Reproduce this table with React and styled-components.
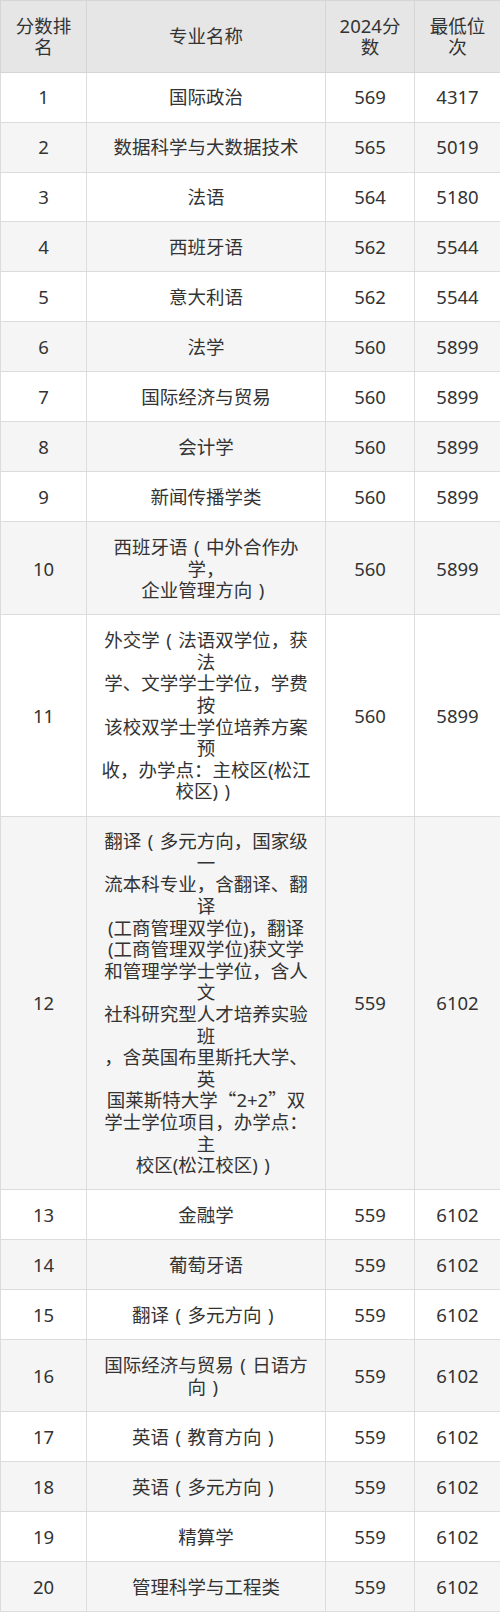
import React from 'react';
import styled, { createGlobalStyle } from 'styled-components';

const rows = [
    ['1', ['国际政治'], '569', '4317'],
    ['2', ['数据科学与大数据技术'], '565', '5019'],
    ['3', ['法语'], '564', '5180'],
    ['4', ['西班牙语'], '562', '5544'],
    ['5', ['意大利语'], '562', '5544'],
    ['6', ['法学'], '560', '5899'],
    ['7', ['国际经济与贸易'], '560', '5899'],
    ['8', ['会计学'], '560', '5899'],
    ['9', ['新闻传播学类'], '560', '5899'],
    ['10', ['西班牙语（中外合作办', '学，', '企业管理方向）'], '560', '5899'],
    ['11', [
        '外交学（法语双学位，获', '法',
        '学、文学学士学位，学费', '按',
        '该校双学士学位培养方案', '预',
        '收，办学点：主校区(松江', '校区)）',
    ], '560', '5899'],
    ['12', [
        '翻译（多元方向，国家级', '一',
        '流本科专业，含翻译、翻', '译',
        '(工商管理双学位)，翻译',
        '(工商管理双学位)获文学',
        '和管理学学士学位，含人', '文',
        '社科研究型人才培养实验', '班',
        '，含英国布里斯托大学、', '英',
        '国莱斯特大学“2+2”双',
        '学士学位项目，办学点：', '主',
        '校区(松江校区)）',
    ], '559', '6102'],
    ['13', ['金融学'], '559', '6102'],
    ['14', ['葡萄牙语'], '559', '6102'],
    ['15', ['翻译（多元方向）'], '559', '6102'],
    ['16', ['国际经济与贸易（日语方', '向）'], '559', '6102'],
    ['17', ['英语（教育方向）'], '559', '6102'],
    ['18', ['英语（多元方向）'], '559', '6102'],
    ['19', ['精算学'], '559', '6102'],
    ['20', ['管理科学与工程类'], '559', '6102'],
];

// full-width parens are drawn centred in their box, quotes come from the CJK font
const renderLine = (line) =>
    line.split(/([（）“”])/).map((part, i) => {
        if (part === '（') return <Paren key={i}>(</Paren>;
        if (part === '）') return <Paren key={i}>)</Paren>;
        if (part === '“' || part === '”') return <Wide key={i}>{part}</Wide>;
        return part;
    });

const Lines = ({ lines }) =>
    lines.map((line, i) => (
        <React.Fragment key={i}>
            {i > 0 && <br />}
            {renderLine(line)}
        </React.Fragment>
    ));

const App = () => {
    return (
        <>
            <GlobalStyle />
            <Table>
                <colgroup>
                    <col style={{ width: '86px' }} />
                    <col style={{ width: '239px' }} />
                    <col style={{ width: '89px' }} />
                    <col style={{ width: '86px' }} />
                </colgroup>
                <thead>
                    <tr>
                        <HeadCell>分数排<br />名</HeadCell>
                        <HeadCell>专业名称</HeadCell>
                        <HeadCell>2024分<br />数</HeadCell>
                        <HeadCell>最低位<br />次</HeadCell>
                    </tr>
                </thead>
                <tbody>
                    {rows.map(([rank, name, score, place], i) => (
                        <Row key={rank} $striped={i % 2 === 1}>
                            <Cell>{rank}</Cell>
                            <Cell><Lines lines={name} /></Cell>
                            <Cell>{score}</Cell>
                            <Cell>{place}</Cell>
                        </Row>
                    ))}
                </tbody>
            </Table>
        </>
    );
};

const GlobalStyle = createGlobalStyle`
    body {
        margin: 0;
        background: #ffffff;
        font-family: "Noto Sans", "Noto Sans CJK SC", sans-serif;
    }
`;

const Table = styled.table`
    width: 500px;
    table-layout: fixed;
    border-collapse: collapse;
    color: #333333;
    font-size: 18.5px;
    line-height: 21.6px;
`;

const HeadCell = styled.th`
    background-color: #e6e6e6;
    border: 1px solid #d6d6d6;
    padding: 13.7px 4px;
    font-weight: normal;
    text-align: center;
    vertical-align: middle;
`;

const Row = styled.tr`
    background-color: ${({ $striped }) => ($striped ? '#f5f5f5' : '#ffffff')};
`;

const Cell = styled.td`
    border: 1px solid #dcdcdc;
    padding: 13.7px 4px;
    text-align: center;
    vertical-align: middle;
    white-space: nowrap;
`;

const Paren = styled.span`
    display: inline-block;
    width: 1em;
    text-align: center;
`;

const Wide = styled.span`
    font-family: "Noto Sans CJK SC", sans-serif;
`;

export default App;
